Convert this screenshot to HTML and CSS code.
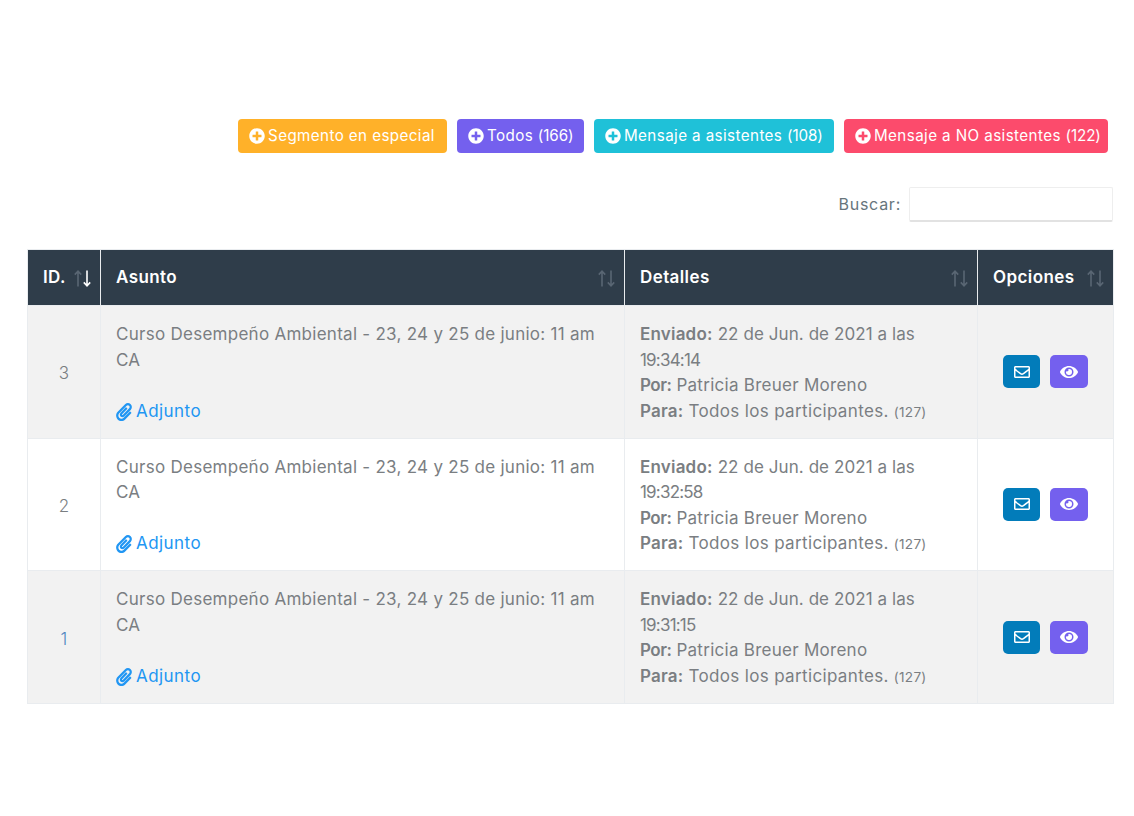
FILE: index.html
```html
<!DOCTYPE html>
<html lang="es">
<head>
<meta charset="utf-8">
<title>Mensajes</title>
<link rel="stylesheet" href="styles.css">
</head>
<body>
<svg class="defs" width="0" height="0" aria-hidden="true">
  <symbol id="plus" viewBox="0 0 512 512"><path fill="currentColor" d="M256 8C119 8 8 119 8 256s111 248 248 248 248-111 248-248S393 8 256 8zm144 276c0 6.600-5.400 12-12 12h-92v92c0 6.600-5.400 12-12 12h-56c-6.600 0-12-5.400-12-12v-92h-92c-6.600 0-12-5.400-12-12v-56c0-6.600 5.400-12 12-12h92v-92c0-6.600 5.400-12 12-12h56c6.600 0 12 5.400 12 12v92h92c6.600 0 12 5.400 12 12v56z"/></symbol>
  <symbol id="clip" viewBox="0 0 448 512"><path fill="currentColor" d="M43.246 466.142c-58.430-60.289-57.341-157.511 1.386-217.581L254.392 34c44.316-45.332 116.351-45.336 160.671 0 43.890 44.894 43.943 117.329 0 162.276L232.214 383.128c-29.855 30.537-78.633 30.111-107.982-.998-28.275-29.970-27.368-77.473 1.452-106.953l143.743-146.835c6.182-6.314 16.312-6.422 22.626-.241l22.861 22.379c6.315 6.182 6.422 16.312.241 22.626L171.427 319.917c-4.932 5.045-5.236 13.428-.648 18.292 4.372 4.634 11.245 4.711 15.688.165l182.849-186.851c19.613-20.062 19.613-52.725-.011-72.798-19.189-19.627-49.957-19.637-69.154 0L90.390 293.295c-34.763 35.560-35.299 93.120-1.191 128.313 34.010 35.093 88.985 35.137 123.058.286l172.060-175.999c6.177-6.319 16.307-6.433 22.626-.256l22.877 22.364c6.319 6.177 6.434 16.307.256 22.626l-172.060 175.998c-59.576 60.938-155.943 60.216-214.770-.485z"/></symbol>
  <symbol id="mail" viewBox="0 0 512 512"><path fill="currentColor" d="M464 64H48C21.490 64 0 85.490 0 112v288c0 26.510 21.490 48 48 48h416c26.510 0 48-21.490 48-48V112c0-26.510-21.490-48-48-48zm0 48v40.805c-22.422 18.259-58.168 46.651-134.587 106.490-16.841 13.247-50.201 45.072-73.413 44.701-23.208.375-56.579-31.459-73.413-44.701C106.180 199.465 70.425 171.067 48 152.805V112h416zM48 400V214.398c22.914 18.251 55.409 43.862 104.938 82.646 21.857 17.205 60.134 55.186 103.062 54.955 42.717.231 80.509-37.199 103.053-54.947 49.528-38.783 82.032-64.401 104.947-82.653V400H48z"/></symbol>
  <symbol id="eye" viewBox="0 0 576 512"><path fill="currentColor" d="M572.520 241.400C518.290 135.590 410.930 64 288 64S57.680 135.640 3.480 241.410a32.350 32.350 0 0 0 0 29.190C57.710 376.410 165.070 448 288 448s230.320-71.640 284.520-177.410a32.350 32.350 0 0 0 0-29.190zM288 400a144 144 0 1 1 144-144 143.930 143.930 0 0 1-144 144zm0-240a95.310 95.310 0 0 0-25.310 3.790 47.850 47.850 0 0 1-66.900 66.900A95.780 95.780 0 1 0 288 160z"/></symbol>
  <symbol id="arrow" viewBox="0 0 8 17"><path fill="none" stroke="currentColor" stroke-width="1.600" d="M4 16.500V1.200M.8 4.600L4 1.200l3.200 3.400"/></symbol>
</svg>

<main class="page">
  <div class="actions">
    <a class="btn btn-orange"><svg class="ico-plus"><use href="#plus"/></svg>Segmento en especial</a>
    <a class="btn btn-purple"><svg class="ico-plus"><use href="#plus"/></svg><span>Todos <span class="count">(166)</span></span></a>
    <a class="btn btn-cyan"><svg class="ico-plus"><use href="#plus"/></svg><span>Mensaje a asistentes <span class="count">(108)</span></span></a>
    <a class="btn btn-red"><svg class="ico-plus"><use href="#plus"/></svg><span>Mensaje a NO asistentes <span class="count">(122)</span></span></a>
  </div>

  <div class="search">
    <label for="q">Buscar:</label>
    <input id="q" type="search">
  </div>

  <table class="grid">
    <colgroup><col class="c1"><col class="c2"><col class="c3"><col class="c4"></colgroup>
    <thead>
      <tr>
        <th><div class="th"><span>ID.</span><span class="sort"><svg class="up"><use href="#arrow"/></svg><svg class="down on"><use href="#arrow"/></svg></span></div></th>
        <th><div class="th"><span>Asunto</span><span class="sort"><svg class="up"><use href="#arrow"/></svg><svg class="down"><use href="#arrow"/></svg></span></div></th>
        <th><div class="th"><span>Detalles</span><span class="sort"><svg class="up"><use href="#arrow"/></svg><svg class="down"><use href="#arrow"/></svg></span></div></th>
        <th><div class="th"><span>Opciones</span><span class="sort"><svg class="up"><use href="#arrow"/></svg><svg class="down"><use href="#arrow"/></svg></span></div></th>
      </tr>
    </thead>
    <tbody>
      <tr class="odd">
        <td class="id">3</td>
        <td>Curso Desempeño Ambiental - 23, 24 y 25 de junio: 11 am<br>CA<br><br><a class="link"><svg class="ico-clip"><use href="#clip"/></svg>Adjunto</a></td>
        <td><b>Enviado:</b> <span class="date">22 de Jun. de 2021 a las</span><br><span class="time">19:34:14</span><br><b class="short">Por:</b> Patricia Breuer Moreno<br><b>Para:</b> <span class="wide">Todos los participantes.</span> <small>(127)</small></td>
        <td class="opts"><a class="ibtn ibtn-blue"><svg class="ico-mail"><use href="#mail"/></svg></a><a class="ibtn ibtn-purple"><svg class="ico-eye"><use href="#eye"/></svg></a></td>
      </tr>
      <tr>
        <td class="id">2</td>
        <td>Curso Desempeño Ambiental - 23, 24 y 25 de junio: 11 am<br>CA<br><br><a class="link"><svg class="ico-clip"><use href="#clip"/></svg>Adjunto</a></td>
        <td><b>Enviado:</b> <span class="date">22 de Jun. de 2021 a las</span><br><span class="time">19:32:58</span><br><b class="short">Por:</b> Patricia Breuer Moreno<br><b>Para:</b> <span class="wide">Todos los participantes.</span> <small>(127)</small></td>
        <td class="opts"><a class="ibtn ibtn-blue"><svg class="ico-mail"><use href="#mail"/></svg></a><a class="ibtn ibtn-purple"><svg class="ico-eye"><use href="#eye"/></svg></a></td>
      </tr>
      <tr class="odd">
        <td class="id id-link">1</td>
        <td>Curso Desempeño Ambiental - 23, 24 y 25 de junio: 11 am<br>CA<br><br><a class="link"><svg class="ico-clip"><use href="#clip"/></svg>Adjunto</a></td>
        <td><b>Enviado:</b> <span class="date">22 de Jun. de 2021 a las</span><br><span class="time">19:31:15</span><br><b class="short">Por:</b> Patricia Breuer Moreno<br><b>Para:</b> <span class="wide">Todos los participantes.</span> <small>(127)</small></td>
        <td class="opts"><a class="ibtn ibtn-blue"><svg class="ico-mail"><use href="#mail"/></svg></a><a class="ibtn ibtn-purple"><svg class="ico-eye"><use href="#eye"/></svg></a></td>
      </tr>
    </tbody>
  </table>
</main>
</body>
</html>
```

FILE: styles.css
```css
* { box-sizing: border-box; }
html, body { margin: 0; background: #fff; }
body {
  font-family: "Inter", "Open Sans", sans-serif;
  font-size: 17px;
  line-height: 25.5px;
  color: #7a7e82;
  letter-spacing: 0.27px;
}
.defs { position: absolute; }
.page { padding: 119px 21px 0 27px; }

.actions {
  display: flex;
  justify-content: flex-end;
  gap: 10px;
  padding-right: 5px;
}
.btn {
  display: flex;
  align-items: center;
  height: 34px;
  padding: 0 11px;
  border-radius: 4px;
  color: #fff;
  font-size: 15.2px;
  letter-spacing: 0.4px;
  white-space: nowrap;
}
.count { letter-spacing: -0.1px; }
.ico-plus { width: 16px; height: 16px; margin-right: 3px; flex: none; }
.btn-orange { background: #ffb129; width: 209px; }
.btn-purple { background: #7460ee; width: 127px; }
.btn-cyan { background: #1fc1d8; width: 240px; }
.btn-red { background: #fc4b6c; width: 264px; }

.search {
  display: flex;
  justify-content: flex-end;
  align-items: center;
  gap: 8px;
  margin-top: 34px;
  color: #67757c;
  font-size: 16px;
  letter-spacing: 0.75px;
}
.search input {
  width: 204px;
  height: 35px;
  border: 1px solid #eeeeee;
  border-bottom: 2px solid #e2e2e2;
  border-radius: 2px;
  background: #fff;
  outline: none;
}

.grid {
  width: 100%;
  margin-top: 27px;
  table-layout: fixed;
  border-collapse: collapse;
  border: 1px solid #e9ecef;
}
.c1 { width: 73px; }
.c2 { width: 524px; }
.c3 { width: 353px; }
.c4 { width: 136px; }

.grid th {
  height: 56px;
  padding: 1px 15px 0;
  background: #2f3d4a;
  border-left: 1px solid #e9ecef;
  color: #fff;
  font-size: 17px;
  font-weight: 600;
  letter-spacing: 0.4px;
  text-align: left;
}
.grid th:first-child { border-left: 0; }
.th { display: flex; justify-content: space-between; align-items: center; margin-right: -6px; }
.sort { display: flex; gap: 1px; color: #596673; }
.sort svg { width: 8px; height: 17px; }
.sort .down { transform: rotate(180deg); }
.sort .on { color: #fff; }

.grid td {
  padding: 16px 15px 13.67px;
  border: 1px solid #e9ecef;
  vertical-align: top;
}
.odd td { background: #f2f2f2; }
.grid .id { text-align: center; vertical-align: middle; font-weight: 300; padding-top: 17px; padding-bottom: 12.67px; }
.grid .id-link { color: #4f86c0; }
b { font-weight: 600; letter-spacing: 0.2px; }
b.short { letter-spacing: -0.5px; }
.date { letter-spacing: 0.08px; }
.time { letter-spacing: -0.8px; }
.wide { letter-spacing: 0.35px; }
small { font-size: 13.6px; line-height: 1; }
.link { color: #2196f3; letter-spacing: 0.45px; }
.ico-clip { width: 16px; height: 18px; margin-right: 4px; vertical-align: -4px; }

.grid .opts { vertical-align: middle; padding: 0 25px; }
.opts { white-space: nowrap; }
.ibtn {
  display: inline-flex;
  justify-content: center;
  align-items: center;
  height: 33px;
  border-radius: 5px;
  color: #fff;
  vertical-align: middle;
}
.ibtn-blue { width: 37px; background: #027cba; margin-right: 10px; }
.ibtn-purple { width: 38px; background: #7460ee; }
.ico-mail { width: 16px; height: 16px; }
.ico-eye { width: 18px; height: 16px; }
```
